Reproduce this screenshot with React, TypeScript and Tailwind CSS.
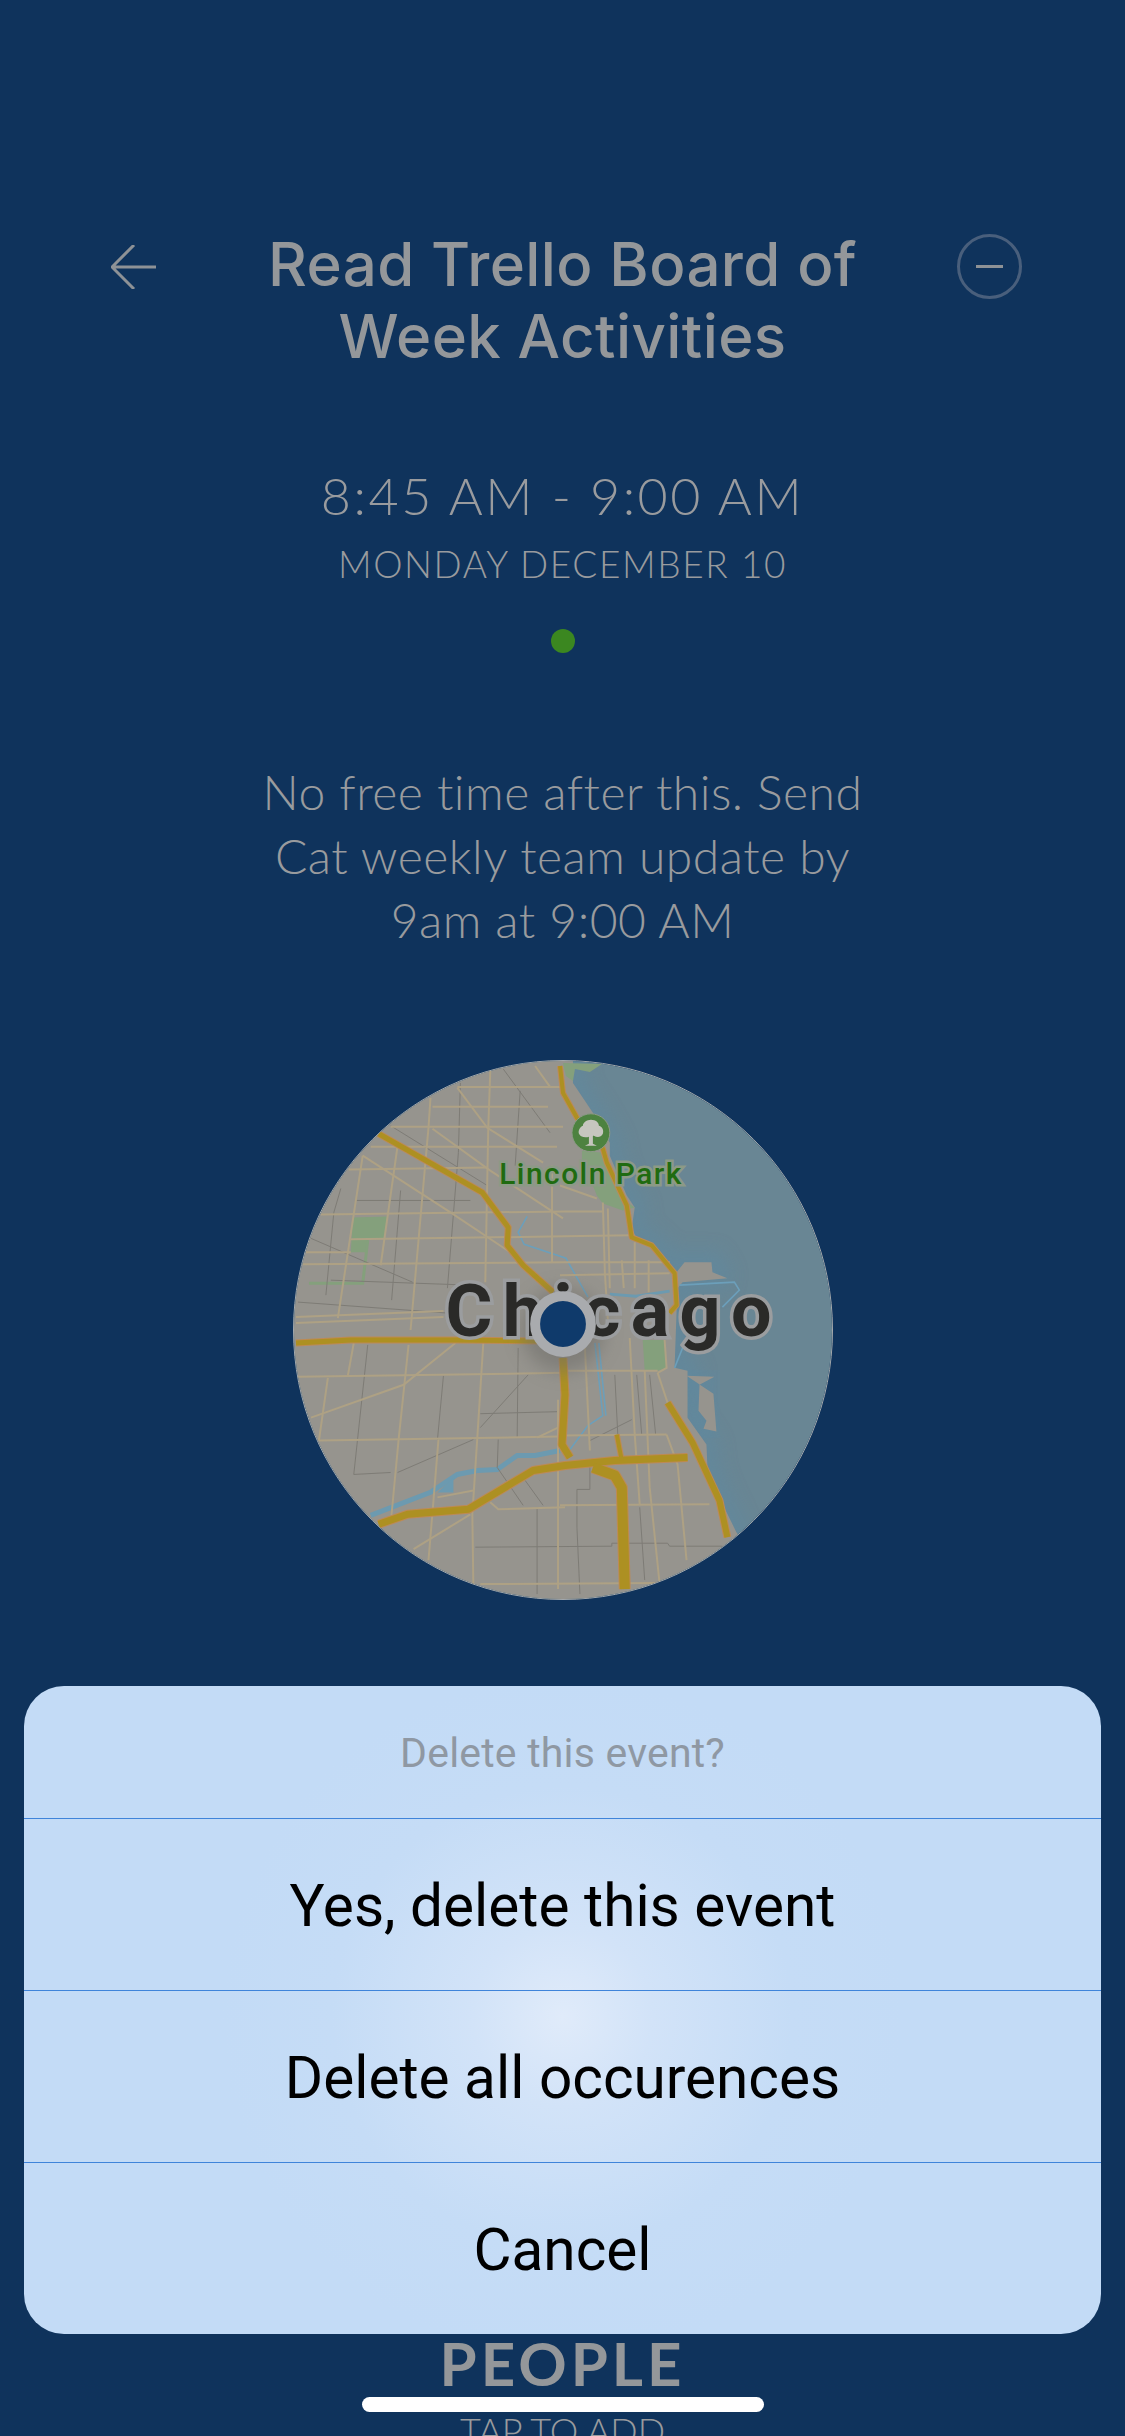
const LAND =
  'M573 1050 L573 1082 L593 1112 L610 1142 L610 1155 L627 1195 L635 1207 L632 1228 L637 1238 L653 1243 L677 1272 L685 1262 L712 1262 L713 1272 L728 1278 L683 1282 L678 1288 L677 1312 L675 1368 L688 1371 L688 1418 L707 1445 L708 1468 L720 1498 L737 1533 L760 1570 L760 1620 L270 1620 L270 1050 Z'

const ISLAND = 'M687 1376 L715 1377 L700 1385 L699 1411 L707 1421 L704 1429 L717 1432 L714 1394 Z'

const MINOR = [
  'M457 1086 L563 1086',
  'M432 1106 L548 1106',
  'M390 1126 L563 1126',
  'M370 1146 L557 1146',
  'M348 1169 L487 1167',
  'M320 1214 L565 1211 L603 1211',
  'M350 1239 L565 1236 L632 1235',
  'M305 1252 L350 1252',
  'M302 1264 L565 1262 L670 1262',
  'M295 1317 L443 1311',
  'M295 1323 L443 1317',
  'M490 1070 L488 1127 L485 1282',
  'M430 1097 L428 1127 L427 1138 L410 1330',
  'M397 1145 L380 1265',
  'M362 1155 L337 1318',
  'M552 1165 L552 1262',
  'M457 1087 L487 1127 L543 1162',
  'M432 1128 L490 1170 L563 1218',
  'M362 1155 L450 1212 L510 1252',
  'M535 1065 L550 1086',
  'M560 1185 L597 1198',
  'M603 1202 L605 1272 L608 1320',
  'M608 1208 L610 1288',
  'M560 1275 L670 1273',
  'M635 1242 L635 1288',
  'M622 1260 L624 1288',
  'M649 1260 L649 1292',
  'M297 1377 L565 1373',
  'M318 1441 L558 1437',
  'M327 1378 L318 1441',
  'M353 1343 L347 1376',
  'M408 1345 L398 1440 L390 1525',
  'M483 1343 L477 1438 L472 1515 L473 1585',
  'M310 1418 L403 1385 L455 1343',
  'M438 1440 L433 1501 L428 1561',
  'M437 1498 L473 1491',
  'M413 1550 L470 1515',
  'M490 1503 L498 1510 L565 1508',
  'M480 1585 L660 1584',
  'M558 1400 L558 1590',
  'M537 1438 L558 1428',
  'M560 1371 L658 1371',
  'M560 1436 L667 1435',
  'M667 1435 L678 1465 L687 1561',
  'M560 1506 L710 1505',
  'M585 1348 L590 1451',
  'M630 1338 L635 1435 L640 1505',
  'M645 1371 L650 1488 L660 1585',
  'M658 1373 L668 1403',
  'M665 1340 L667 1368 L658 1373',
]

const GRAY = [
  'M503 1068 L550 1132',
  'M460 1082 L458 1152 L447 1288',
  'M310 1238 L412 1282',
  'M390 1125 L487 1185',
  'M340 1188 L333 1212 L325 1295',
  'M297 1302 L447 1313',
  'M367 1345 L353 1475 L390 1473',
  'M397 1473 L473 1440',
  'M443 1376 L437 1440',
  'M528 1375 L480 1428',
  'M480 1414 L557 1412',
  'M518 1348 L517 1438',
  'M498 1440 L497 1468 L523 1506',
  'M525 1481 L543 1506',
  'M537 1508 L537 1595',
  'M475 1548 L612 1547 L612 1544 L668 1544 L670 1547 L723 1547',
  'M590 1461 L590 1490 L577 1490 L577 1528 L580 1595',
  'M640 1508 L645 1581',
  'M632 1420 L590 1441',
  'M615 1375 L618 1435',
  'M637 1375 L642 1435',
  'M650 1375 L656 1435',
  'M400 1190 L391 1300',
  'M520 1090 L515 1165',
  'M355 1200 L470 1200',
  'M330 1280 L470 1285',
]

const RIVERS = [
  'M527 1216 L518 1232 L524 1244 L566 1258 L588 1297',
  'M595 1343 L603 1416 L588 1426 L570 1450',
  'M599 1343 L606 1416',
  'M680 1285 L735 1282 L740 1290 L723 1307',
  'M683 1348 L675 1368',
]

// highways: path + casing/fill width
const HIGHWAYS: [string, number][] = [
  ['M378 1133 L482 1192 L508 1227 L507 1245 L523 1265 L553 1292', 5],
  ['M560 1065 L563 1092 L577 1117 L603 1148 L607 1162 L627 1205 L632 1237 L652 1245 L675 1273 L677 1305 L670 1313', 4],
  ['M295 1343 L350 1340 L457 1340 L537 1341', 5],
  ['M563 1358 L565 1395 L562 1445 L570 1458', 7],
  ['M378 1525 L407 1515 L468 1510 L533 1471 L565 1466 L615 1461 L688 1458', 7],
  ['M593 1468 L615 1476 L622 1488 L625 1590', 10],
  ['M617 1435 L622 1461', 4],
  ['M668 1403 L693 1443 L720 1501 L728 1538', 6],
]

function ChicagoMap() {
  return (
    <svg viewBox="293 1060 540 540" className="block h-full w-full">
      <defs>
        <filter id="coast" x="-10%" y="-10%" width="120%" height="120%">
          <feGaussianBlur stdDeviation="9" />
        </filter>
        <filter id="pin-shadow" x="-50%" y="-50%" width="200%" height="200%">
          <feGaussianBlur stdDeviation="9" />
        </filter>
      </defs>
      <rect x="293" y="1060" width="540" height="540" fill="#698694" />
      <path d={LAND} fill="none" stroke="#5b8ba6" strokeWidth="24" opacity="0.4" filter="url(#coast)" />
      <path d={ISLAND} fill="none" stroke="#5b8ba6" strokeWidth="16" opacity="0.35" filter="url(#coast)" />
      <path d={LAND} fill="#96948e" />
      <path d={ISLAND} fill="#96948e" />

      <path d="M563 1062 L602 1063 L590 1071 L575 1068 L573 1080 L566 1075 Z" fill="#84a07c" />
      <path d="M582 1150 L603 1152 L622 1198 L635 1207 L623 1210 L603 1203 L597 1195 L582 1158 Z" fill="#84a07c" />
      <path d="M352 1217 L387 1216 L384 1238 L368 1239 L366 1252 L350 1252 Z" fill="#84a07c" />
      <path d="M367 1240 L362 1283 L308 1283" fill="none" stroke="#84a07c" strokeWidth="3" />
      <path d="M643 1340 L665 1340 L667 1368 L658 1371 L645 1371 Z" fill="#84a07c" />

      {RIVERS.map((d) => (
        <path key={d} d={d} fill="none" stroke="#6c9fba" strokeWidth="1.6" />
      ))}
      <path d="M370 1516 L430 1493 L457 1475 L477 1471 L497 1470 L517 1456 L535 1456 L560 1451" fill="none" stroke="#6c9ab0" strokeWidth="5" />
      <path d="M437 1493 L453 1493 L453 1481 L457 1475 Z" fill="#6c9ab0" />
      <path d="M610 1294 L636 1296 L670 1291" fill="none" stroke="#6c9ab0" strokeWidth="3" />

      {GRAY.map((d) => (
        <path key={d} d={d} fill="none" stroke="#7d7b75" strokeWidth="1" />
      ))}
      {MINOR.map((d) => (
        <path key={d} d={d} fill="none" stroke="#aea184" strokeWidth="2" />
      ))}

      {HIGHWAYS.map(([d, w]) => (
        <path key={d} d={d} fill="none" stroke="#bd8a55" strokeWidth={w + 2} strokeLinejoin="round" />
      ))}
      {HIGHWAYS.map(([d, w]) => (
        <path key={d + 'fill'} d={d} fill="none" stroke="#ad9022" strokeWidth={w} strokeLinejoin="round" />
      ))}

      <text
        x="499"
        y="1183"
        fill="#1f6b10"
        stroke="#8c9a86"
        strokeWidth="5"
        className="font-['Roboto',sans-serif] text-[30px] font-medium tracking-[1.5px] [paint-order:stroke]"
      >
        Lincoln Park
      </text>

      <circle cx="591" cy="1132" r="19" fill="#4d8240" stroke="#8e9a88" strokeWidth="1" />
      <path
        d="M591 1119 C596 1119 599 1122 599 1125 C603 1126 604 1130 603 1133 C601 1137 597 1137 594 1135 L593 1135 L593 1143 L597 1145 L585 1145 L589 1143 L589 1136 C586 1137 581 1137 579 1133 C578 1130 580 1126 583 1125 C583 1122 587 1119 591 1119 Z"
        fill="#c6c6bf"
      />

      <circle cx="563" cy="1330" r="42" fill="#6d6c68" opacity="0.55" filter="url(#pin-shadow)" />
      <text
        x="445"
        y="1336"
        fill="#2a2a28"
        stroke="#9b9d9f"
        strokeWidth="7"
        className="font-['Roboto',sans-serif] text-[72px] font-bold tracking-[10.5px] [paint-order:stroke]"
      >
        Chicago
      </text>
      <circle cx="563" cy="1324" r="28" fill="#0f3a6b" stroke="#a9abae" strokeWidth="10" />
    </svg>
  )
}

export default function App() {
  return (
    <div className="relative flex h-[2436px] w-[1125px] flex-col items-center overflow-hidden bg-[#0f335c] text-[#999b9e]">
      <div className="mt-[228px] grid w-full shrink-0 grid-cols-[1fr_640px_1fr] text-[#94979a]">
        <svg viewBox="0 0 45 44" fill="none" className="mt-[17px] ml-[111px] h-[44px] w-[45px] stroke-[#8e9296]">
          <path d="M45 22 H1 M23 0 L1 22 L23 44" strokeWidth="3" />
        </svg>
        <h1 className="text-center font-['Inter',sans-serif] text-[60px] leading-[72px] font-medium tracking-[0.4px]">
          Read Trello Board of
          <br />
          Week Activities
        </h1>
        <div className="mt-[6px] mr-[103px] flex h-[65px] w-[65px] items-center justify-center justify-self-end rounded-full border-[3px] border-[#495f7c]">
          <div className="h-[3px] w-[27px] bg-[#8e9296]" />
        </div>
      </div>

      <p className="mt-[90px] font-['Lato',sans-serif] text-[52px] leading-[66px] font-light tracking-[2.5px]">
        8:45 AM - 9:00 AM
      </p>
      <p className="mt-[13px] font-['Lato',sans-serif] text-[37px] leading-[46px] font-light tracking-[1.6px]">
        MONDAY DECEMBER 10
      </p>
      <div className="mt-[42px] h-[24px] w-[24px] shrink-0 rounded-full bg-[#3b8720]" />

      <p className="mt-[107px] text-center font-['Lato',sans-serif] text-[48px] leading-[64px] font-light tracking-[0.5px]">
        No free time after this. Send
        <br />
        Cat weekly team update by
        <br />
        9am at 9:00 AM
      </p>

      <div className="mt-[108px] h-[540px] w-[540px] shrink-0 overflow-hidden rounded-full border border-[#a4a9ac]">
        <ChicagoMap />
      </div>

      <p className="mt-[733px] font-['Lato',sans-serif] text-[60px] leading-[60px] font-bold tracking-[4px] text-[#94979a]">PEOPLE</p>
      <p className="mt-[17px] font-['Lato',sans-serif] text-[36px] leading-[40px] font-light">TAP TO ADD</p>

      {/* action sheet lies over the page */}
      <div className="absolute top-[1686px] left-[24px] flex h-[648px] w-[1077px] flex-col overflow-hidden rounded-[40px] bg-[#c3dbf6] bg-[radial-gradient(circle_at_50%_51%,#e0ebfa_0px,#d2e3f8_90px,#c5dcf6_230px,#c3dbf6_340px)] text-center font-['Roboto',sans-serif] text-[58.5px] text-black">
        <div className="flex h-[132px] items-center justify-center pt-[3px] text-[41px] tracking-[0.2px] text-[#8f98a3]">Delete this event?</div>
        <div className="flex h-[172px] items-center justify-center border-t-[1.5px] border-[#3f84da] pt-[5px]">Yes, delete this event</div>
        <div className="flex h-[172px] items-center justify-center border-t-[1.5px] border-[#3f84da] pt-[5px]">Delete all occurences</div>
        <div className="flex h-[172px] items-center justify-center border-t-[1.5px] border-[#3f84da] pt-[5px]">Cancel</div>
      </div>

      <div className="absolute top-[2397px] left-[362px] h-[15px] w-[402px] rounded-full bg-white" />
    </div>
  )
}
